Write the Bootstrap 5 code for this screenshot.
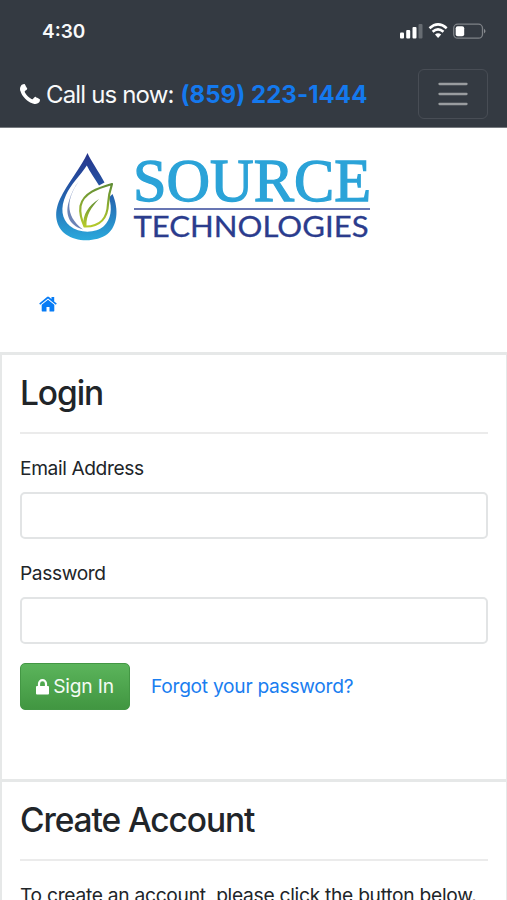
<!DOCTYPE html>
<html lang="en">
<head>
<meta charset="utf-8">
<meta name="viewport" content="width=device-width, initial-scale=1">
<title>Login - Source Technologies</title>
<link href="https://cdn.jsdelivr.net/npm/bootstrap@5.3.0/dist/css/bootstrap.min.css" rel="stylesheet">
<style>
body{font-family:Inter,"Liberation Sans",sans-serif;font-size:19.2px;line-height:29px;color:#212529;height:900px;overflow:hidden;background:#fff}
a{color:#1a7ef0;text-decoration:none}
.topbar{background:#343a42;height:128px;border-bottom:1px solid #777b80;color:#f8f9fa}
.status{height:62px;padding:0 20px 0 42px}
.clock{font-size:19px;font-weight:600;letter-spacing:0}
.callbar{height:65px;padding:0 19px 2px 20px}
.call{font-size:24px;letter-spacing:-.85px;white-space:nowrap;padding-top:2px}
.call a{color:#1479ee;font-weight:700;letter-spacing:.05px;margin-left:1px}
.call svg{margin-right:6px;margin-bottom:2px}
.menu-btn{width:70px;height:50px;border:1.5px solid #484d55;border-radius:6px}
.brand{height:152px}
.crumb{height:72px;padding:16px 0 0 39px}
.panel{border:solid #e6e8e8;border-width:3px 2px 0 2px;padding:0 18px;margin-right:-1px}
.login-panel{height:427px}
.panel h2{font-size:33.5px;font-weight:500;line-height:40px;letter-spacing:-1.1px;margin:0;padding-top:18px}
.panel hr{border-top:2px solid #ebebeb;opacity:1;margin:19px 0 20px}
.panel .form-label{margin-bottom:9px;display:block;letter-spacing:-.4px}
.panel .form-control{height:47px;border:2px solid #e2e4e5;border-radius:5px}
.signin{width:110px;height:47px;border:1px solid #439744;border-radius:5px;background:linear-gradient(#5bb45b,#419641);color:#f4fbf4;font-size:19.2px;letter-spacing:-.2px}
.signin:hover{color:#fff}
.signrow{margin-top:19px}
.forgot{margin-left:21px;letter-spacing:-.28px}
.intro{letter-spacing:-.27px}
</style>
</head>
<body>
<header class="topbar">
  <div class="status d-flex align-items-center justify-content-between">
    <span class="clock">4:30</span>
    <svg width="88" height="18" viewBox="0 0 88 18" fill="#fff">
      <rect x="1" y="10.500" width="4" height="6" rx="1"/><rect x="7.200" y="8" width="4" height="8.500" rx="1"/><rect x="13.500" y="5" width="4" height="11.500" rx="1"/><rect x="19.500" y="2" width="4" height="14.500" rx="1" fill="#676c72"/>
      <g fill="none" stroke="#fff" stroke-width="2.500"><path d="M30.500 6.200Q39 -1.500 47.700 6.200"/><path d="M33.600 9.800Q39 5 44.500 9.800"/></g><path d="M36 12.600Q39 10 42.200 12.600L39.100 16Z"/>
      <rect x="54.700" y="2.200" width="28.800" height="14" rx="4" fill="none" stroke="#7e8287" stroke-width="1.300"/><rect x="56.700" y="4.200" width="8.500" height="10" rx="2"/><path d="M85 6.800q3 2.400 0 4.800z" fill="#8b8e92"/>
    </svg>
  </div>
  <div class="callbar d-flex align-items-center justify-content-between">
    <div class="call d-flex align-items-center">
      <svg width="20" height="20" viewBox="0 0 1408 1408" fill="#fff"><path d="M1408 1112q0 27-10 70.500t-21 68.500q-21 50-122 106-94 51-186 51-27 0-52.500-3.500t-57.500-12.500-47.500-14.500-55.500-20.500-49-18q-98-35-175-83-128-79-264.500-215.500T152 776q-48-77-83-175-3-9-18-49t-20.500-55.500T16 449 3.500 391.500 0 339q0-92 51-186Q107 52 157 31q25-11 68.500-21T296 0q14 0 21 3 18 6 53 76 11 19 30 54t35 63.500 31 53.500q3 4 17.500 25t21.500 35.500 7 28.500q0 20-28.500 50t-62 55-62 53-28.500 46q0 9 5 22.500t8.500 20.500 14 24 11.500 19q76 137 174 235t235 174q2 1 19 11.500t24 14 20.500 8.500 22.500 5q18 0 46-28.500t53-62 55-62 50-28.500q14 0 28.500 7t35.500 21.500 25 17.500q25 15 53.500 31t63.500 35 54 30q70 35 76 53 3 7 3 21z"/></svg>
      <span>Call us now: <a href="#">(859) 223-1444</a></span>
    </div>
    <button class="menu-btn bg-transparent p-0 d-flex align-items-center justify-content-center" aria-label="Menu">
      <svg width="30" height="26" stroke="#999c9f" stroke-width="2.300" stroke-linecap="round"><path d="M1.500 3H28.500M1.500 13H28.500M1.500 23H28.500"/></svg>
    </button>
  </div>
</header>
<div class="brand">
  <svg class="d-block" width="400" height="130" viewBox="0 128 400 130">
    <defs>
      <linearGradient id="drop" x1="0" y1="0" x2="0" y2="1"><stop offset="0" stop-color="#27348b"/><stop offset=".4" stop-color="#2456a5"/><stop offset="1" stop-color="#2aa9dc"/></linearGradient>
      <linearGradient id="leaf" x1="0" y1="1" x2="0" y2="0"><stop offset="0" stop-color="#b5ca2b"/><stop offset="1" stop-color="#5f8c35"/></linearGradient>
    </defs>
    <path fill="url(#drop)" d="M87.500 153C82 166 67 184 60 199C53 214 56 227 66 234.500C77 242.500 97 242 107.500 234C117 226.500 119.500 210 112.500 194L109 197.500C112.500 209 111 219 104 226C96 233.500 79 233.500 70 226C61.500 219 60 208 66 195C71 184 80 176 86.800 165.500C90 172 95 179 99 185.500L104.500 182.500C99 172 91 161 87.500 153Z"/>
    <path fill="#6c83b5" d="M79 181C67 198 64 215 83 229.500C68 225 65 213 69 201C71 194 74 187 79 181Z"/>
    <path fill="none" stroke="url(#leaf)" stroke-width="2.200" stroke-linejoin="round" d="M112 184C98 188 83 193 80.500 206C79.500 213 81.500 220 84.500 226.500C101 227 107.500 217 108 204C108.500 196 110 190 112 184Z"/>
    <path fill="url(#leaf)" d="M99 199C88 206 83 214 83 226L86.500 226C86 215 91 208 99 199Z"/>
    <g>
      <text x="133" y="201" font-family="'Liberation Serif',serif" font-size="61" fill="#2ba3d8" stroke="#2ba3d8" stroke-width="1.300" textLength="238" lengthAdjust="spacingAndGlyphs">SOURCE</text>
      <text x="133.500" y="236.500" font-family="Lato,sans-serif" font-size="29" fill="#2b3c8d" stroke="#2b3c8d" stroke-width=".3" textLength="235" lengthAdjust="spacingAndGlyphs">TECHNOLOGIES</text>
    </g>
    <path d="M134 209H370" stroke="#36499a" stroke-width="1.600"/>
  </svg>
</div>
<nav class="crumb" aria-label="breadcrumb">
  <a href="#" class="d-block lh-1"><svg class="d-block" width="18" height="16" viewBox="0 0 18 16" fill="#087cf5"><path d="M9 3.700L15.300 8.800V14.800Q15.300 15.400 14.700 15.400H10.500V10.900H7.500V15.400H3.300Q2.700 15.400 2.700 14.800V8.800Z"/><path d="M.2 7.600L8 .9Q9 .2 10 .9L12.500 3.100V1H15.200V5.400L17.800 7.600L16.800 8.800L9 2.500L1.200 8.800Z"/></svg></a>
</nav>
<main>
  <section class="panel login-panel">
    <h2>Login</h2>
    <hr>
    <form onsubmit="return false">
      <label class="form-label" for="email">Email Address</label>
      <input class="form-control" id="email" type="email">
      <label class="form-label mt-3 pt-1" for="pw">Password</label>
      <input class="form-control" id="pw" type="password">
      <div class="d-flex align-items-center signrow">
        <button class="btn signin p-0 d-flex align-items-center justify-content-center">
          <svg width="13" height="16" viewBox="0 0 13 16" class="me-1"><path d="M3 8V4.700a3.500 3.500 0 0 1 7 0V8" fill="none" stroke="#fff" stroke-width="2.200"/><rect y="7" width="13" height="8.500" rx="1" fill="#fff"/></svg>
          <span>Sign In</span>
        </button>
        <a href="#" class="forgot">Forgot your password?</a>
      </div>
    </form>
  </section>
  <section class="panel">
    <h2>Create Account</h2>
    <hr>
    <p class="intro text-nowrap mb-0">To create an account, please click the button below.</p>
  </section>
</main>
<script src="https://cdn.jsdelivr.net/npm/bootstrap@5.3.0/dist/js/bootstrap.bundle.min.js"></script>
</body>
</html>
